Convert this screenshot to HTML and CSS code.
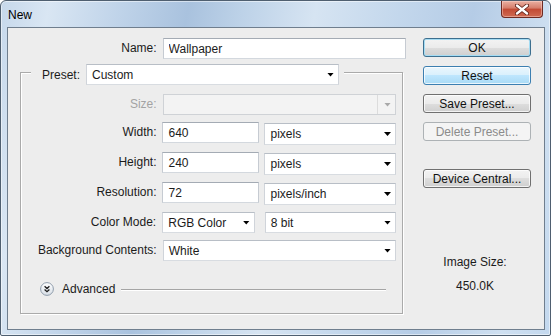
FILE: index.html
```html
<!DOCTYPE html>
<html lang="en">

<head>
    <meta charset="UTF-8">
    <meta name="viewport" content="width=device-width,initial-scale=1">
    <title>New</title>
    <link rel="stylesheet" href="styles.css">
</head>

<body>
    <div class="window">
        <div class="titlebar">
            <span class="title">New</span>
            <span class="close">
                <svg width="14" height="11" viewBox="0 0 14 11">
                    <path d="M2 1.5L12 9.5M12 1.5L2 9.5" stroke="#5a1c14" stroke-width="4" stroke-linecap="round" />
                    <path d="M2 1.5L12 9.5M12 1.5L2 9.5" stroke="#fff" stroke-width="2.4" stroke-linecap="round" />
                </svg>
            </span>
        </div>

        <div class="client">
            <div class="form">
                <div class="row name-row">
                    <span class="label">Name:</span>
                    <input class="field name" type="text" value="Wallpaper">
                </div>

                <div class="group">
                    <div class="legend">
                        <span class="legend-label">Preset:</span>
                        <div class="combo preset"><span>Custom</span></div>
                    </div>

                    <div class="row first">
                        <span class="label disabled">Size:</span>
                        <div class="combo wide off"><span></span></div>
                    </div>

                    <div class="row near">
                        <span class="label">Width:</span>
                        <input class="field short" type="text" value="640">
                        <div class="combo unit"><span>pixels</span></div>
                    </div>

                    <div class="row">
                        <span class="label">Height:</span>
                        <input class="field short" type="text" value="240">
                        <div class="combo unit"><span>pixels</span></div>
                    </div>

                    <div class="row">
                        <span class="label">Resolution:</span>
                        <input class="field short" type="text" value="72">
                        <div class="combo unit"><span>pixels/inch</span></div>
                    </div>

                    <div class="row">
                        <span class="label">Color Mode:</span>
                        <div class="combo mode"><span>RGB Color</span></div>
                        <div class="combo unit flat"><span>8 bit</span></div>
                    </div>

                    <div class="row near">
                        <span class="label">Background Contents:</span>
                        <div class="combo wide"><span>White</span></div>
                    </div>

                    <div class="advanced">
                        <svg class="expander" width="14" height="14" viewBox="0 0 14 14">
                            <defs>
                                <linearGradient id="ball" x1="0" y1="0" x2="0" y2="1">
                                    <stop offset="0" stop-color="#ffffff" />
                                    <stop offset="1" stop-color="#d6dde5" />
                                </linearGradient>
                            </defs>
                            <circle cx="7" cy="7" r="6.4" fill="url(#ball)" stroke="#8f9cab" stroke-width="1" />
                            <path d="M4.6 4.3L7 6.5L9.4 4.3M4.6 7.5L7 9.7L9.4 7.5" fill="none" stroke="#1d1d1d" stroke-width="1.3" />
                        </svg>
                        <span class="advanced-label">Advanced</span>
                        <span class="rule"></span>
                    </div>
                </div>
            </div>

            <div class="side">
                <div class="btn default">OK</div>
                <div class="btn hot">Reset</div>
                <div class="btn">Save Preset...</div>
                <div class="btn off">Delete Preset...</div>
                <div class="btn apart">Device Central...</div>

                <div class="info size-label">Image Size:</div>
                <div class="info size-value">450.0K</div>
            </div>
        </div>
    </div>
</body>

</html>
```

FILE: styles.css
```css
html,
body {
    margin: 0;
    padding: 0;
}

body {
    font-family: "Liberation Sans", Arial, sans-serif;
    font-size: 12px;
    color: #1b1b1b;
    background: #fff;
}

.window {
    width: 551px;
    height: 336px;
    box-sizing: border-box;
    display: flex;
    flex-direction: column;
    border: 1px solid #4f5f70;
    border-radius: 6px 6px 2px 2px;
    background: linear-gradient(100deg, #c6d8eb 0%, #d9e6f3 8%, #bfd3e9 20%, #a9c2de 31%, #bdd2e8 40%, #d6e4f2 52%, #c3d7ec 66%, #b5cce6 78%, #cfe0f1 92%, #c3d8ee 100%);
    box-shadow: inset 0 0 0 1px rgba(255, 255, 255, .5);
}

.titlebar {
    height: 26px;
    display: flex;
    align-items: flex-start;
    padding: 0 7px;
}

.title {
    margin-top: 7px;
    color: #000;
}

.close {
    margin-left: auto;
    width: 42px;
    height: 17px;
    box-sizing: border-box;
    display: flex;
    align-items: center;
    justify-content: center;
    border: 1px solid #6e2a22;
    border-top: 0;
    border-radius: 0 0 4px 4px;
    background: linear-gradient(#eab0a2 0%, #d57c6a 45%, #c24a34 50%, #cf6a52 100%);
    box-shadow: inset 0 0 0 1px rgba(255, 220, 210, .45);
}

.client {
    flex: 1;
    display: flex;
    margin: 0 5px 5px 6px;
    border: 1px solid #6f7e8e;
    background: #ededed;
}

/* left column */

.form {
    width: 398px;
    padding-top: 10px;
}

.row {
    display: flex;
    align-items: flex-start;
    height: 21px;
    margin-top: 9px;
}

.row.first {
    margin-top: 9px;
}

.row.near {
    margin-top: 7px;
}

.name-row {
    margin-top: 0;
    align-items: center;
}

.label {
    width: 136px;
    margin-right: 6px;
    line-height: 21px;
    text-align: right;
    white-space: nowrap;
}

.name-row .label {
    width: 149px;
}

.label.disabled {
    color: #a3a3a3;
}

.field {
    box-sizing: border-box;
    height: 21px;
    margin: 0;
    padding: 0 5px;
    border: 1px solid;
    border-color: #a4abb4 #c6cbd2 #d3d8de #c6cbd2;
    background: #fff;
    font: inherit;
    color: #1b1b1b;
    outline: none;
}

.field.name {
    width: 244px;
}

.field.short {
    width: 97px;
}

.combo {
    box-sizing: border-box;
    height: 21px;
    display: flex;
    align-items: center;
    padding-left: 5px;
    border: 1px solid;
    border-color: #b8bec6 #d0d4da #d8dce1 #d0d4da;
    background: #fff;
}

.combo span {
    flex: 1;
    white-space: nowrap;
}

.combo::after {
    content: "";
    width: 7px;
    height: 4px;
    margin-right: 4px;
    background: #000;
    clip-path: polygon(0 0, 100% 0, 50% 100%);
}

.combo.preset {
    width: 253px;
}

.combo.wide {
    width: 234px;
}

.combo.unit {
    width: 132px;
    height: 22px;
    margin: 1px 0 0 5px;
}

.combo.unit.flat {
    margin-top: 0;
    margin-left: 10px;
    height: 21px;
}

.combo.mode {
    width: 93px;
}

.combo.off {
    border-color: #cfd2d6;
    background: linear-gradient(to right, #f3f3f3 calc(100% - 18px), #dcdcdc calc(100% - 18px), #dcdcdc calc(100% - 17px), #f3f3f3 calc(100% - 17px));
}

.combo.off::after {
    background: #a9a9a9;
}

/* group box */

.group {
    box-sizing: border-box;
    width: 383px;
    height: 242px;
    margin: 13px 0 0 12px;
    padding-right: 6px;
    border: 1px solid #aaaaaa;
    box-shadow: inset 1px 1px 0 #fff, 1px 1px 0 #fff;
}

.legend {
    display: flex;
    align-items: center;
    width: max-content;
    margin: -9px 0 0 10px;
    padding: 0 5px 0 11px;
    background: #ededed;
}

.legend-label {
    margin-right: 6px;
}

.advanced {
    display: flex;
    align-items: center;
    height: 14px;
    margin-top: 21px;
    padding-left: 19px;
}

.advanced-label {
    margin-left: 8px;
}

.rule {
    flex: 1;
    height: 1px;
    margin: 0 10px 0 6px;
    background: #a5a5a5;
    box-shadow: 0 1px 0 #fff;
}

/* right column */

.side {
    width: 108px;
    margin-left: 17px;
    padding-top: 10px;
}

.btn {
    box-sizing: border-box;
    height: 19px;
    display: flex;
    align-items: center;
    justify-content: center;
    border: 1px solid #707070;
    border-radius: 3px;
    background: linear-gradient(#f3f3f3 0%, #ebebeb 50%, #dedede 50%, #cfcfcf 100%);
    box-shadow: inset 0 0 0 1px rgba(255, 255, 255, .75);
    color: #111;
}

.btn + .btn {
    margin-top: 9px;
}

.btn.default {
    border-color: #3d6f8f;
    box-shadow: inset 0 0 0 1px #a5dcf3;
}

.btn.hot {
    border-color: #3c7fb1;
    background: linear-gradient(#eaf6fd 0%, #d9f0fc 50%, #bee6fd 50%, #a9daf5 100%);
}

.btn.off {
    border-color: #adb2b5;
    background: #f4f4f4;
    box-shadow: none;
    color: #8b8b8b;
}

.btn.apart {
    margin-top: 28px;
}

.info {
    line-height: 14px;
    text-align: center;
    padding-right: 4px;
}

.size-label {
    margin-top: 67px;
}

.size-value {
    margin-top: 10px;
}
```
